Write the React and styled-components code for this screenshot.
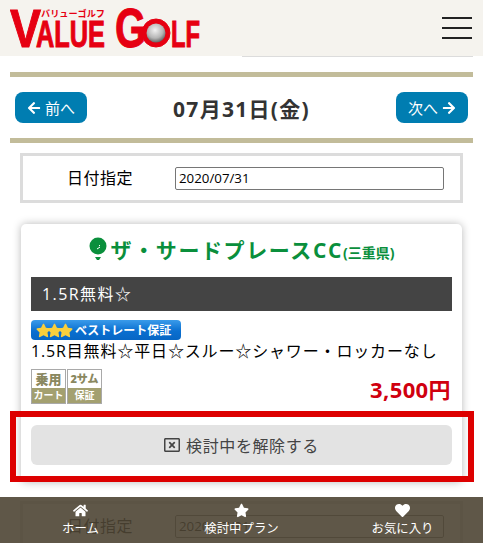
import React from 'react'
import styled, { createGlobalStyle } from 'styled-components'
import { FaArrowLeft, FaArrowRight, FaHome, FaStar, FaHeart, FaRegWindowClose } from 'react-icons/fa'

const GlobalStyle = createGlobalStyle`
  html, body {
    margin: 0;
    height: 100%;
    overflow: hidden;
    background: #fff;
    font-family: "Open Sans", "Noto Sans CJK JP", sans-serif;
    color: #333;
  }
  * { box-sizing: border-box; }
`

const Page = styled.div`
  position: relative;
  width: 483px;
  height: 543px;
  overflow: hidden;
`

const Header = styled.header`
  height: 56px;
  background: #f5f3ee;
  display: flex;
  align-items: center;
  justify-content: space-between;
  padding: 0 11px 0 10px;
`

const Burger = styled.div`
  width: 30px;
  display: flex;
  flex-direction: column;
  gap: 8px;
  span {
    height: 2px;
    background: #222;
  }
`

const HeaderRule = styled.div`
  height: 1px;
  margin-left: 242px;
  margin-right: 10px;
  background: #dcdcdc;
`

const DateNav = styled.section`
  margin: 15px 10px 0;
  height: 71px;
  border-top: 5px solid #c2bc9a;
  border-bottom: 5px solid #c2bc9a;
  display: flex;
  align-items: center;
  justify-content: space-between;
  padding: 0 5px;
`

const NavButton = styled.a`
  width: 72px;
  height: 31px;
  border-radius: 8px;
  background: #007db1;
  color: #fff;
  font-size: 15px;
  display: flex;
  align-items: center;
  justify-content: center;
  gap: 4px;
  svg { font-size: 14px; }
`

const DateTitle = styled.h2`
  margin: 0;
  font-size: 21px;
  font-weight: 700;
  letter-spacing: 1.3px;
  color: #333;
`

const DatePicker = styled.form`
  margin: 10px 20px 0;
  height: 50px;
  border: 3px solid #dcdcdc;
  display: flex;
  align-items: center;
  padding-left: 44px;
  label {
    width: 108px;
    font-size: 16px;
    letter-spacing: 0.5px;
    color: #000;
    margin-top: -3px;
  }
  input {
    width: 269px;
    height: 23px;
    padding: 0 3px;
    border: 1px solid #767676;
    border-radius: 2px;
    font-family: "Open Sans", sans-serif;
    font-size: 13.3px;
    color: #000;
    background: #fff;
  }
`

const Card = styled.article`
  margin: 21px 21px 0;
  height: 258px;
  padding: 0 10px;
  background: #fff;
  border-radius: 5px;
  box-shadow: 0 0 8px rgba(0, 0, 0, 0.28);
`

const CourseName = styled.h3`
  margin: 0;
  height: 53px;
  padding-bottom: 4px;
  display: flex;
  align-items: center;
  justify-content: center;
  gap: 4px;
  color: #0a8f3c;
  font-size: 21px;
  font-weight: 700;
  letter-spacing: 1.6px;
  white-space: nowrap;
  small {
    font-size: 14px;
    margin: 7px 0 0 -4px;
    letter-spacing: 0;
  }
`

const PlanBar = styled.div`
  height: 34px;
  background: #444;
  color: #fff;
  font-size: 16px;
  line-height: 34px;
  letter-spacing: 1.4px;
  padding-left: 11px;
`

const BestRate = styled.div`
  width: 150px;
  height: 20px;
  margin-top: 9px;
  border-radius: 4px;
  background: linear-gradient(#3a9bea, #0a6fd0 55%, #0766c4);
  color: #fff;
  font-size: 12px;
  font-weight: 700;
  display: flex;
  align-items: center;
  padding-left: 5px;
  gap: 2px;
  white-space: nowrap;
`

const Stars = styled.span`
  display: flex;
  color: #f9cf3c;
  svg + svg { margin-left: -4px; }
`

const PlanText = styled.p`
  margin: 0;
  height: 29px;
  font-size: 16px;
  line-height: 22px;
  letter-spacing: 0.85px;
  color: #000;
  white-space: nowrap;
`

const PlanFoot = styled.div`
  display: flex;
  justify-content: space-between;
`

const Tags = styled.div`
  display: flex;
  gap: 1px;
`

const Tag = styled.div`
  width: 35px;
  height: 35px;
  border: 1px solid #a9a9a9;
  display: flex;
  flex-direction: column;
  font-weight: 700;
  text-align: center;
  white-space: nowrap;
  b {
    flex: 1;
    color: #8a8860;
    font-size: ${(props) => props.$topSize}px;
    line-height: 18px;
  }
  i {
    height: 15px;
    background: #a3a070;
    color: #fff;
    font-size: 10px;
    font-style: normal;
    line-height: 15px;
  }
`

const Price = styled.div`
  color: #d0000f;
  font-size: 22px;
  font-weight: 700;
  letter-spacing: 0.4px;
  margin: 3px 1px 0 0;
`

const RemoveButton = styled.button`
  display: flex;
  align-items: center;
  justify-content: center;
  gap: 6px;
  width: 100%;
  height: 40px;
  margin-top: 21px;
  border: 0;
  border-radius: 6px;
  background: #e3e3e3;
  color: #444;
  font-family: inherit;
  font-size: 16px;
  letter-spacing: 0.6px;
`

const Highlight = styled.div`
  position: absolute;
  left: 10px;
  top: 411px;
  width: 464px;
  height: 71px;
  border: 6px solid #dd0000;
  pointer-events: none;
`

const SecondPicker = styled(DatePicker)`
  margin-top: 19px;
`

const BottomNav = styled.nav`
  position: absolute;
  left: 0;
  right: 0;
  bottom: 0;
  height: 46px;
  background: rgba(78, 69, 52, 0.9);
  display: grid;
  grid-template-columns: repeat(3, 1fr);
`

const BottomItem = styled.a`
  display: flex;
  flex-direction: column;
  align-items: center;
  color: #fff;
  font-size: 12.4px;
  line-height: 18px;
  padding-top: 6px;
  svg {
    font-size: 15px;
    margin-bottom: 2px;
  }
`

function Logo() {
  return (
    <svg width="191" height="50" viewBox="0 0 191 50">
      <defs>
        <radialGradient id="ball" cx="0.45" cy="0.35" r="0.7">
          <stop offset="0" stopColor="#f2f2f2" />
          <stop offset="0.6" stopColor="#b5b5b5" />
          <stop offset="1" stopColor="#555" />
        </radialGradient>
      </defs>
      <g fill="#e60012" stroke="#e60012" strokeWidth="1" fontFamily="'Liberation Sans', sans-serif" fontWeight="700">
        <text x="0" y="44" fontSize="54" textLength="31" lengthAdjust="spacingAndGlyphs">V</text>
        <text x="26" y="44" fontSize="36" textLength="69" lengthAdjust="spacingAndGlyphs">ALUE</text>
        <text x="105" y="44" fontSize="56" textLength="31" lengthAdjust="spacingAndGlyphs">G</text>
        <circle cx="146" cy="30" r="14" fill="#e60012" />
        <circle cx="146" cy="30" r="9.5" fill="url(#ball)" stroke="none" />
        <text x="161" y="44" fontSize="36" textLength="29" lengthAdjust="spacingAndGlyphs">LF</text>
      </g>
      <text x="31" y="14" fill="#e60012" fontSize="9" fontWeight="700" fontFamily="'Noto Sans CJK JP', sans-serif" textLength="64" lengthAdjust="spacingAndGlyphs">バリューゴルフ</text>
    </svg>
  )
}

function TeeIcon() {
  return (
    <svg width="18" height="24" viewBox="0 0 18 24">
      <circle cx="9" cy="9" r="8.5" fill="#0a8f3c" />
      <path d="M6 20h6l-2 3H8z" fill="#0a8f3c" />
      <path d="M8 12l3-2M10 8l1 1" stroke="#fff" strokeWidth="1" fill="none" />
    </svg>
  )
}

export default function App() {
  return (
    <Page>
      <GlobalStyle />
      <Header>
        <Logo />
        <Burger>
          <span />
          <span />
          <span />
        </Burger>
      </Header>
      <HeaderRule />

      <DateNav>
        <NavButton><FaArrowLeft /> 前へ</NavButton>
        <DateTitle>07月31日(金)</DateTitle>
        <NavButton>次へ <FaArrowRight /></NavButton>
      </DateNav>

      <DatePicker>
        <label>日付指定</label>
        <input readOnly value="2020/07/31" />
      </DatePicker>

      <Card>
        <CourseName>
          <TeeIcon />
          ザ・サードプレースCC<small>(三重県)</small>
        </CourseName>
        <PlanBar>1.5R無料☆</PlanBar>
        <BestRate>
          <Stars>
            <FaStar size={15} />
            <FaStar size={15} />
            <FaStar size={15} />
          </Stars>
          ベストレート保証
        </BestRate>
        <PlanText>1.5R目無料☆平日☆スルー☆シャワー・ロッカーなし</PlanText>
        <PlanFoot>
          <Tags>
            <Tag $topSize={13}><b>乗用</b><i>カート</i></Tag>
            <Tag $topSize={11}><b>2サム</b><i>保証</i></Tag>
          </Tags>
          <Price>3,500円</Price>
        </PlanFoot>
        <RemoveButton><FaRegWindowClose size={16} /> 検討中を解除する</RemoveButton>
      </Card>

      <SecondPicker>
        <label>日付指定</label>
        <input readOnly value="2020/07/31" />
      </SecondPicker>

      <Highlight />

      <BottomNav>
        <BottomItem><FaHome />ホーム</BottomItem>
        <BottomItem><FaStar />検討中プラン</BottomItem>
        <BottomItem><FaHeart />お気に入り</BottomItem>
      </BottomNav>
    </Page>
  )
}
